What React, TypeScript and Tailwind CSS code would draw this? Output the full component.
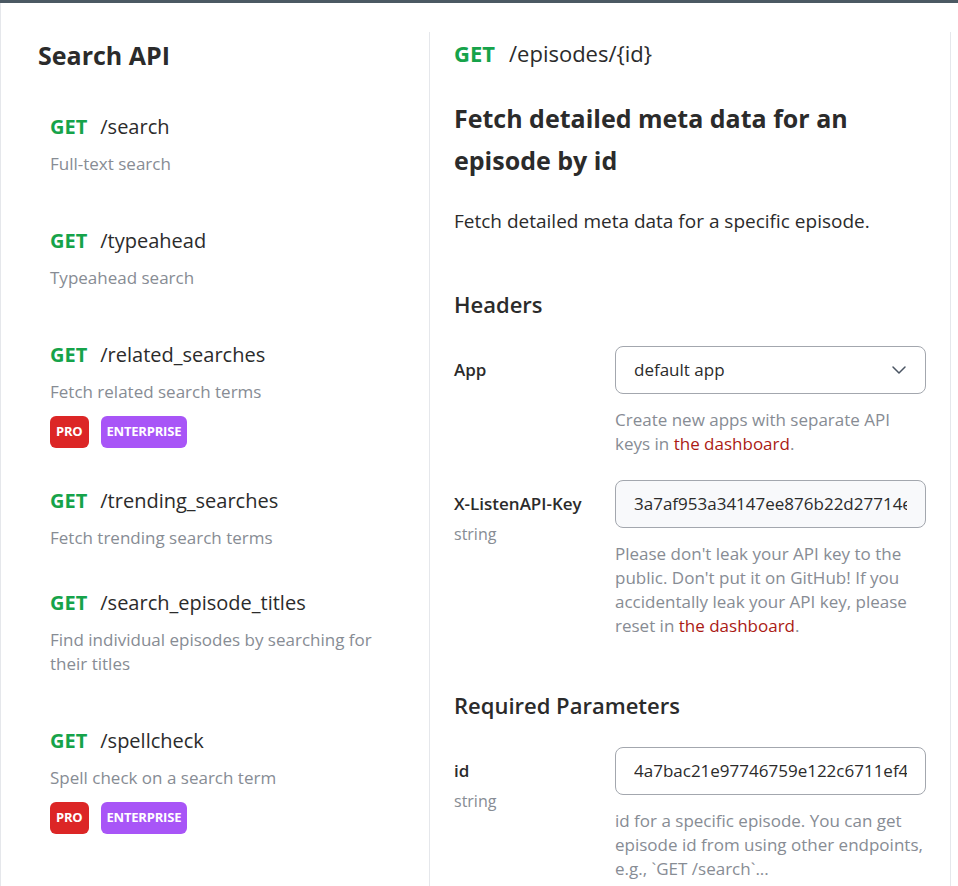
import React from 'react';
import { ChevronDown } from 'lucide-react';

// ─── Data ─────────────────────────────────────────────────────
interface Endpoint {
  path: string;
  desc: string;
  badges?: boolean;
  space: string;
}

const ENDPOINTS: Endpoint[] = [
  { path: '/search', desc: 'Full-text search', space: 'mb-[51px]' },
  { path: '/typeahead', desc: 'Typeahead search', space: 'mb-[51px]' },
  { path: '/related_searches', desc: 'Fetch related search terms', badges: true, space: 'mb-[39px]' },
  { path: '/trending_searches', desc: 'Fetch trending search terms', space: 'mb-[39px]' },
  { path: '/search_episode_titles', desc: 'Find individual episodes by searching for their titles', space: 'mb-[51px]' },
  { path: '/spellcheck', desc: 'Spell check on a search term', badges: true, space: 'mb-[51px]' },
];

const FONT = "font-['Open_Sans','Noto_Sans',sans-serif]";

// ─── Sidebar item ─────────────────────────────────────────────
function EndpointItem({ item }: { item: Endpoint }) {
  return (
    <div className={item.space}>
      <div className="flex items-center gap-[13px] text-[20px] leading-[28px]">
        <span className="font-bold text-[#16a34a]">GET</span>
        <span className="font-medium text-[#2b2b2b]">{item.path}</span>
      </div>
      <p className="mt-[11px] pr-[30px] text-[17px] leading-[24px] text-[#878c94]">{item.desc}</p>
      {item.badges && (
        <div className="mt-3 flex gap-3">
          <span className="flex h-8 items-center rounded-md bg-[#dc2626] px-[6px] text-[13px] font-bold tracking-[-0.2px] text-white">PRO</span>
          <span className="flex h-8 items-center rounded-md bg-[#a855f7] px-[6px] text-[13px] font-bold tracking-[-0.2px] text-white">ENTERPRISE</span>
        </div>
      )}
    </div>
  );
}

// ─── Field row ────────────────────────────────────────────────
function FieldRow({
  label,
  type,
  children,
  help,
}: {
  label: string;
  type?: string;
  children: React.ReactNode;
  help: React.ReactNode;
}) {
  return (
    <div className="flex">
      <div className="w-[161px] shrink-0">
        <div className="flex h-12 items-center text-[17px] font-semibold text-[#2b2b2b]">{label}</div>
        {type && <div className="-mt-[6px] text-[16px] leading-[24px] text-[#878c94]">{type}</div>}
      </div>
      <div className="w-[311px]">
        {children}
        <p className="mt-[14px] text-[17px] leading-[24px] text-[#878c94]">{help}</p>
      </div>
    </div>
  );
}

const Dashboard = () => <span className="text-[#ab1a14]">the dashboard</span>;

// ─── Page ─────────────────────────────────────────────────────
export default function App() {
  return (
    <div className={`h-[886px] overflow-hidden bg-white border-t-[3px] border-[#4b5963] ${FONT}`}>
      <div className="flex h-full border-l border-[#e5e7eb]">
        {/* Sidebar */}
        <aside className="w-[428px] shrink-0 pl-[37px] pt-[36px]">
          <h2 className="text-[25px] font-bold leading-[32px] text-[#2b2b2b]">Search API</h2>
          <div className="mt-[42px] pl-3">
            {ENDPOINTS.map((e) => (
              <EndpointItem key={e.path} item={e} />
            ))}
          </div>
        </aside>

        {/* Detail */}
        <main className="mt-[29px] w-[522px] shrink-0 border-x border-[#e5e7eb] px-6 pt-[6px] text-[#2b2b2b]">
          <div className="flex items-center gap-[14px] text-[22px] leading-[30px]">
            <span className="font-bold text-[#16a34a]">GET</span>
            <span>/episodes/{'{id}'}</span>
          </div>

          <h1 className="mt-[29px] text-[25px] font-bold leading-[42px]">
            Fetch detailed meta data for an episode by id
          </h1>
          <p className="mt-[26px] text-[19px] leading-[28px]">Fetch detailed meta data for a specific episode.</p>

          <h3 className="mt-[54px] text-[22px] font-semibold leading-[30px]">Headers</h3>
          <div className="mt-[27px] flex flex-col gap-6">
            <FieldRow
              label="App"
              help={
                <>
                  Create new apps with separate API keys in <Dashboard />.
                </>
              }
            >
              <div className="flex h-12 items-center justify-between rounded-lg border border-[#a3a7ae] bg-white pl-[18px] pr-[14px] text-[17px]">
                <span>default app</span>
                <ChevronDown className="h-6 w-6 text-[#4b5563]" strokeWidth={1.5} />
              </div>
            </FieldRow>
            <FieldRow
              label="X-ListenAPI-Key"
              type="string"
              help={
                <>
                  Please don't leak your API key to the public. Don't put it on GitHub! If you accidentally leak your
                  API key, please reset in <Dashboard />.
                </>
              }
            >
              <div className="flex h-12 items-center overflow-hidden whitespace-nowrap rounded-lg border border-[#a3a7ae] bg-[#f8f9fb] px-[18px] text-[17px]">
                <span className="block overflow-hidden">3a7af953a34147ee876b22d27714e5d2</span>
              </div>
            </FieldRow>
          </div>

          <h3 className="mt-[52px] text-[22px] font-semibold leading-[30px]">Required Parameters</h3>
          <div className="mt-[27px]">
            <FieldRow
              label="id"
              type="string"
              help={<>id for a specific episode. You can get episode id from using other endpoints, e.g., `GET /search`...</>}
            >
              <div className="flex h-12 items-center overflow-hidden whitespace-nowrap rounded-lg border border-[#a3a7ae] bg-white px-[18px] text-[17px]">
                <span className="block overflow-hidden">4a7bac21e97746759e122c6711ef4</span>
              </div>
            </FieldRow>
          </div>
        </main>
      </div>
    </div>
  );
}
